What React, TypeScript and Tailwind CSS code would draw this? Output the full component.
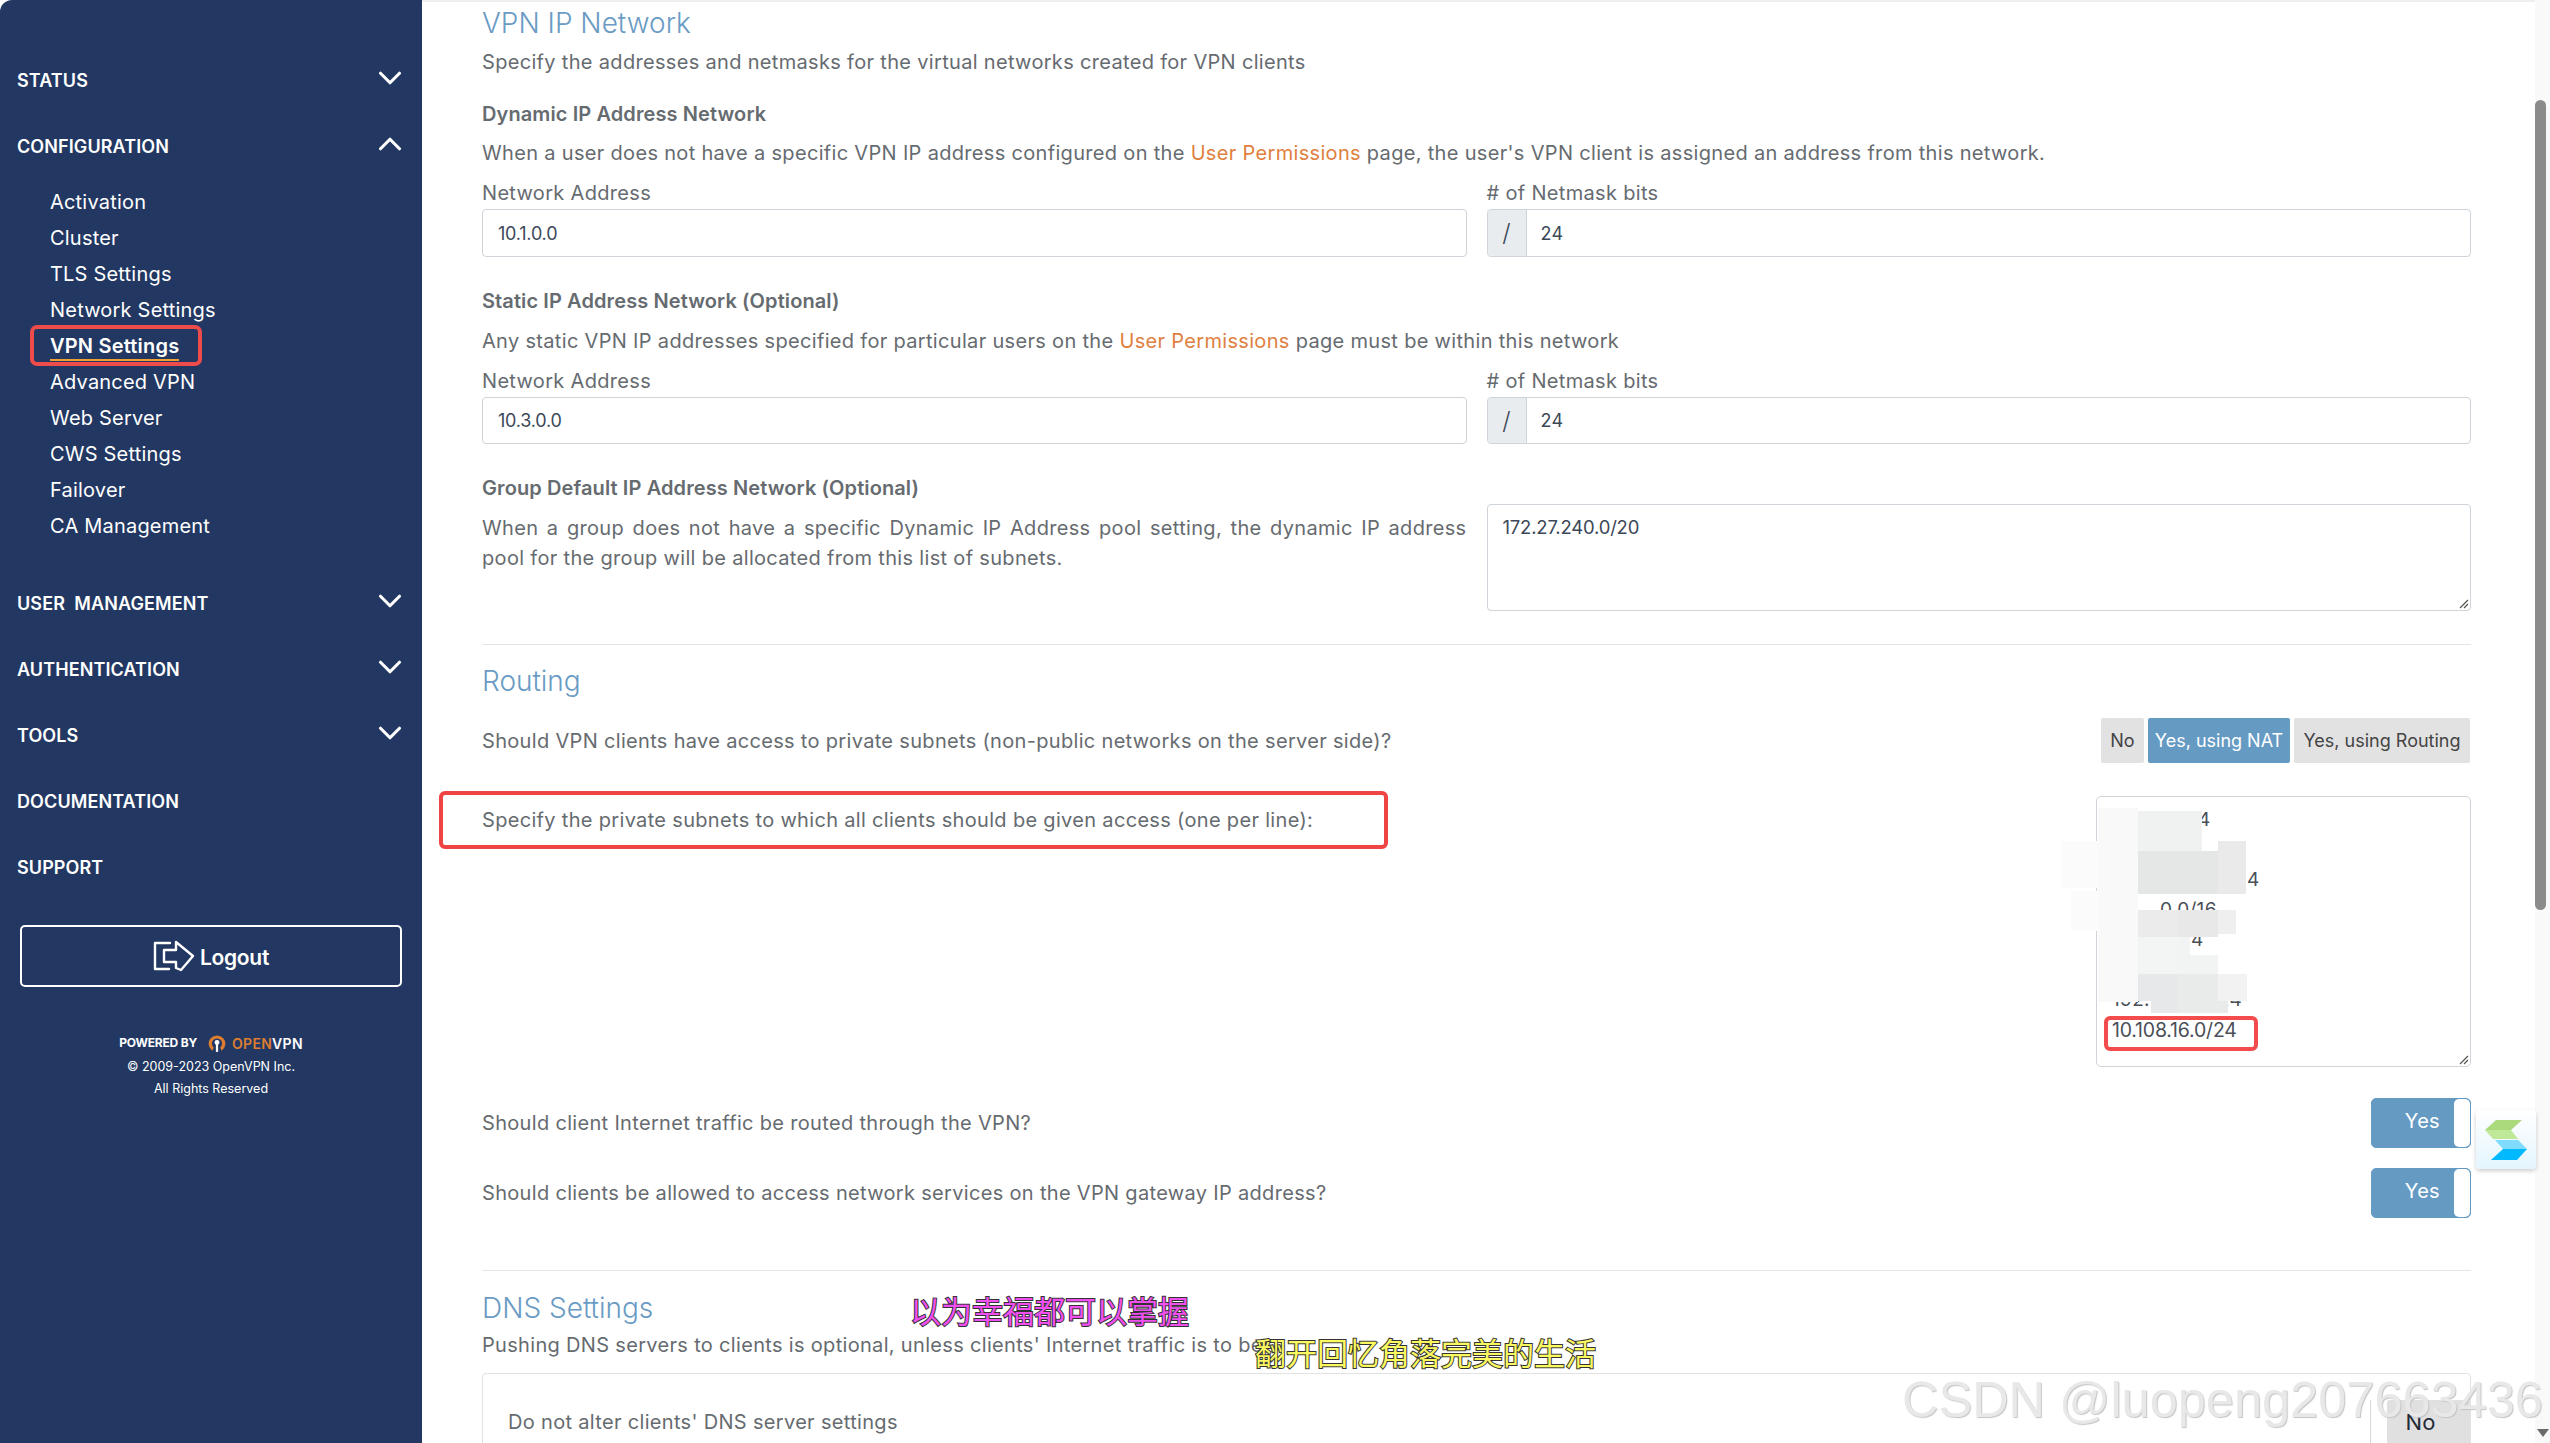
import React from "react";
import { ChevronDown, ChevronUp } from "lucide-react";

const configItems = [
  "Activation",
  "Cluster",
  "TLS Settings",
  "Network Settings",
  "VPN Settings",
  "Advanced VPN",
  "Web Server",
  "CWS Settings",
  "Failover",
  "CA Management",
];

// blurred patches over the redacted subnets
const patches = [
  "left-[1px] top-[11px] w-[40px] h-[194px] bg-[#f9f9f9]",
  "left-[-36px] top-[44px] w-[37px] h-[47px] bg-[#fbfbfb]",
  "left-[-26px] top-[94px] w-[27px] h-[40px] bg-[#fbfbfb]",
  "left-[41px] top-[14px] w-[40px] h-[40px] bg-[#f0f1f1]",
  "left-[41px] top-[54px] w-[40px] h-[43px] bg-[#e5e6e6]",
  "left-[41px] top-[113px] w-[40px] h-[27px] bg-[#ebebeb]",
  "left-[41px] top-[140px] w-[40px] h-[37px] bg-[#f3f4f4]",
  "left-[41px] top-[177px] w-[40px] h-[27px] bg-[#e7e8e9]",
  "left-[54px] top-[204px] w-[27px] h-[12px] bg-[#e7e8e9]",
  "left-[81px] top-[14px] w-[24px] h-[40px] bg-[#f0f1f1]",
  "left-[81px] top-[54px] w-[40px] h-[43px] bg-[#e5e6e6]",
  "left-[81px] top-[113px] w-[40px] h-[27px] bg-[#e8e8e8]",
  "left-[81px] top-[140px] w-[12px] h-[18px] bg-[#f2f3f3]",
  "left-[81px] top-[158px] w-[40px] h-[19px] bg-[#f2f3f3]",
  "left-[81px] top-[177px] w-[50px] h-[39px] bg-[#e9eaea]",
  "left-[121px] top-[44px] w-[28px] h-[53px] bg-[#eaeaea]",
  "left-[121px] top-[113px] w-[18px] h-[24px] bg-[#efefef]",
  "left-[121px] top-[177px] w-[29px] h-[27px] bg-[#f2f2f2]",
];

const NavHead = ({ label, open, chevron = true }: { label: string; open?: boolean; chevron?: boolean }) => (
  <div className="h-[66px] flex items-center justify-between pl-[17px] pr-[13px]">
    <span className="text-[18px] font-semibold tracking-[0.1px] whitespace-pre text-white">{label}</span>
    {chevron &&
      (open ? (
        <ChevronUp className="w-[38px] h-[38px] -mt-[5px] text-white" strokeWidth={2} />
      ) : (
        <ChevronDown className="w-[38px] h-[38px] -mt-[5px] text-white" strokeWidth={2} />
      ))}
  </div>
);

const Sidebar = () => (
  <aside className="w-[422px] h-full shrink-0 bg-[#223862] rounded-tl-[12px] text-white pt-[47px]">
    <NavHead label="STATUS" />
    <NavHead label="CONFIGURATION" open />
    <ul className="pt-[5px] pb-[26px] pl-[50px]">
      {configItems.map((item) =>
        item === "VPN Settings" ? (
          <li key={item} className="relative h-[36px] leading-[36px] text-[20px] tracking-[0.2px]">
            <span className="font-semibold border-b-2 border-[#f0a030] pb-[1px]">{item}</span>
            <div className="absolute left-[-20px] top-[-3px] w-[172px] h-[41px] border-[4px] border-[#ee4b4b] rounded-[7px]" />
          </li>
        ) : (
          <li key={item} className="h-[36px] leading-[36px] text-[20px] tracking-[0.2px]">
            {item}
          </li>
        )
      )}
    </ul>
    <NavHead label="USER  MANAGEMENT" />
    <NavHead label="AUTHENTICATION" />
    <NavHead label="TOOLS" />
    <NavHead label="DOCUMENTATION" chevron={false} />
    <NavHead label="SUPPORT" chevron={false} />
    <div className="mt-[25px] mx-[20px] h-[62px] border-2 border-white rounded-[5px] flex items-center justify-center gap-[3px]">
      <svg width="44" height="32" viewBox="0 0 44 32" fill="none" stroke="white" strokeWidth="2.4" strokeLinejoin="round" strokeLinecap="round">
        <path d="M17 3H2v26h14" />
        <path d="M11 10h12V2l17 14-12 14-5-2v-6H11z" />
      </svg>
      <span className="text-[21px] font-semibold mt-[4px] tracking-[-0.3px]">Logout</span>
    </div>
    <div className="mt-[44px] flex items-center justify-center gap-[10px] h-[24px]">
      <span className="text-[12px] font-bold tracking-[-0.2px]">POWERED BY</span>
      <span className="flex items-center gap-[5px]">
        <svg width="20" height="20" viewBox="0 0 18 18" fill="none">
          <path d="M5 16A7.5 7.5 0 1 1 13 16L12 13A4.6 4.6 0 1 0 6 13Z" fill="#dd7d30" />
          <circle cx="9" cy="8.5" r="2.2" fill="white" />
          <path d="M8 9h2v8H8z" fill="white" />
        </svg>
        <span className="text-[14px] font-semibold tracking-[0.3px]">
          <span className="text-[#dd7d30]">OPEN</span>VPN
        </span>
      </span>
    </div>
    <p className="text-center text-[12.5px] leading-[20px] mt-[2px]">© 2009-2023 OpenVPN Inc.</p>
    <p className="text-center text-[12.5px] leading-[20px] mt-[2px]">All Rights Reserved</p>
  </aside>
);

const SectionTitle = ({ children, className = "" }: { children: React.ReactNode; className?: string }) => (
  <h2 className={`text-[28px] font-light text-[#6a9bc4] h-[46px] leading-[46px] ${className}`}>{children}</h2>
);

const Body = ({ children, className = "" }: { children: React.ReactNode; className?: string }) => (
  <p className={`h-[32px] leading-[32px] whitespace-nowrap ${className}`}>{children}</p>
);

const NetworkRow = ({ address, h }: { address: string; h: string }) => (
  <div className="mt-[8px] grid grid-cols-2 gap-x-[20px]">
    <div>
      <Body>Network Address</Body>
      <div className={`${h} border border-[#ced4da] rounded-[4px] px-[15px] flex items-center text-[#3c4858] text-[18px] tracking-[-0.2px]`}>{address}</div>
    </div>
    <div>
      <Body># of Netmask bits</Body>
      <div className={`${h} border border-[#ced4da] rounded-[4px] flex items-stretch text-[#3c4858] text-[18px]`}>
        <span className="w-[39px] bg-[#e9ecef] border-r border-[#ced4da] rounded-l-[4px] flex items-center justify-center text-[24px] font-light">/</span>
        <span className="pl-[14px] flex items-center">24</span>
      </div>
    </div>
  </div>
);

const Toggle = ({ className = "" }: { className?: string }) => (
  <div className={`w-[100px] h-[50px] rounded-[5px] bg-[#659ac3] border border-[#659ac3] flex overflow-hidden ${className}`}>
    <span className="flex-1 text-white text-[20px] flex items-center justify-end pr-[14px] pb-[5px]">Yes</span>
    <span className="w-[16px] bg-white rounded-[5px]" />
  </div>
);

const SubnetBox = () => (
  <div className="relative w-[375px] h-[271px] border border-[#ced4da] rounded-[5px] pt-[8px] pl-[15px] text-[19px] leading-[30px] text-[#4a4f57]">
    <div className="pl-[86px] h-[30px]">4</div>
    <div className="h-[30px]" />
    <div className="pl-[135px] h-[30px]">4</div>
    <div className="pl-[48px] h-[30px]">0.0/16</div>
    <div className="pl-[79px] h-[30px]">4</div>
    <div className="h-[30px]" />
    <div className="h-[30px] flex justify-between w-[130px] overflow-hidden">
      <span>192.</span>
      <span>24</span>
    </div>
    <div className="h-[30px] text-[19.5px] tracking-[-0.2px]">10.108.16.0/24</div>
    {patches.map((p) => (
      <div key={p} className={`absolute ${p}`} />
    ))}
    <div className="absolute left-[7px] top-[219px] w-[154px] h-[35px] border-[4px] border-[#f44c4c] rounded-[6px]" />
    <svg className="absolute right-[1px] bottom-[1px]" width="10" height="10" viewBox="0 0 10 10" stroke="#555" strokeWidth="1.2">
      <path d="M1 9 9 1M5 9 9 5" />
    </svg>
  </div>
);

const FloatingWidget = () => (
  <div className="absolute left-[2476px] top-[1110px] w-[60px] h-[59px] rounded-[4px] bg-gradient-to-b from-white to-[#e4f5fe] shadow-[0_2px_4px_rgba(0,0,0,0.2)] flex items-center justify-center">
    <svg width="44" height="42" viewBox="0 0 44 42">
      <path d="M12 1H38L27 11H1z" fill="#abda7c" />
      <path d="M1 11H27L34 20H9z" fill="#bfe998" />
      <path d="M11 21H34L43 30H19z" fill="#7fdcff" />
      <path d="M19 30H43L33 41H7z" fill="#00b9ff" />
    </svg>
  </div>
);

const Overlays = () => (
  <>
    <div className="absolute left-[439px] top-[791px] w-[949px] h-[58px] border-[4px] border-[#ee4444] rounded-[6px]" />
    <FloatingWidget />
    <div className="absolute left-[910px] top-[1290px] text-[31px] leading-[40px] font-['Noto_Sans_CJK_SC',sans-serif] text-[#f050f0] [-webkit-text-stroke:2px_#333] [paint-order:stroke_fill] whitespace-nowrap">
      以为幸福都可以掌握
    </div>
    <div className="absolute left-[1255px] top-[1332px] text-[31px] leading-[40px] font-['Noto_Sans_CJK_SC',sans-serif] text-[#fbf860] [-webkit-text-stroke:2px_#333] [paint-order:stroke_fill] whitespace-nowrap">
      翻开回忆角落完美的生活
    </div>
    <div className="absolute left-[1902px] top-[1368px] text-[50.5px] leading-[64px] font-['Liberation_Sans',sans-serif] text-[#e8e8e8] [text-shadow:1px_1px_1px_#c4c4c4] whitespace-nowrap">
      CSDN @luopeng207663436
    </div>
  </>
);

const Scrollbar = () => (
  <div className="w-[15px] h-full shrink-0 bg-[#f9f9f9] relative">
    <div className="absolute left-0 top-[100px] w-[11px] h-[810px] rounded-[6px] bg-[#8b8b8b]" />
    <div className="absolute left-[2px] bottom-[6px] w-0 h-0 border-x-[6px] border-x-transparent border-t-[8px] border-t-[#6a6a6a]" />
  </div>
);

export default function App() {
  return (
    <div className="relative w-[2550px] h-[1443px] overflow-hidden flex bg-white font-['Inter',sans-serif]">
      <Sidebar />
      <main className="flex-1 min-w-0 overflow-hidden pl-[60px] pr-[64px] text-[20px] tracking-[0.32px] text-[#666b70] border-t-2 border-[#eeeeee]">
        <SectionTitle className="-mt-[2px] tracking-normal">VPN IP Network</SectionTitle>
        <Body>Specify the addresses and netmasks for the virtual networks created for VPN clients</Body>

        <Body className="mt-[20px] font-semibold tracking-[0.1px]">Dynamic IP Address Network</Body>
        <Body className="mt-[7px]">
          When a user does not have a specific VPN IP address configured on the <span className="text-[#e08040]">User Permissions</span> page, the user's VPN client is assigned an address from this network.
        </Body>
        <NetworkRow address="10.1.0.0" h="h-[48px]" />

        <Body className="mt-[28px] font-semibold tracking-[0.1px]">Static IP Address Network (Optional)</Body>
        <Body className="mt-[8px]">
          Any static VPN IP addresses specified for particular users on the <span className="text-[#e08040]">User Permissions</span> page must be within this network
        </Body>
        <NetworkRow address="10.3.0.0" h="h-[47px]" />

        <Body className="mt-[28px] font-semibold tracking-[0.1px]">Group Default IP Address Network (Optional)</Body>
        <div className="grid grid-cols-2 gap-x-[20px]">
          <p className="mt-[9px] leading-[30px] text-justify">
            When a group does not have a specific Dynamic IP Address pool setting, the dynamic IP address pool for the group will be allocated from this list of subnets.
          </p>
          <div className="relative h-[107px] border border-[#ced4da] rounded-[4px] px-[15px] py-[9px] text-[#3c4858] text-[18.5px] tracking-[-0.2px]">
            172.27.240.0/20
            <svg className="absolute right-[1px] bottom-[1px]" width="10" height="10" viewBox="0 0 10 10" stroke="#555" strokeWidth="1.2">
              <path d="M1 9 9 1M5 9 9 5" />
            </svg>
          </div>
        </div>

        <hr className="mt-[33px] border-[#e5e5e5]" />
        <SectionTitle className="mt-[13px] tracking-normal">Routing</SectionTitle>

        <div className="mt-[14px] flex items-center justify-between">
          <Body>Should VPN clients have access to private subnets (non-public networks on the server side)?</Body>
          <div className="flex gap-[4px] text-[18px] tracking-normal h-[45px] mr-[1px]">
            <span className="w-[43px] bg-[#e2e2e2] rounded-[2px] flex items-center justify-center text-[#444]">No</span>
            <span className="w-[142px] bg-[#659ac3] rounded-[2px] flex items-center justify-center text-white">Yes, using NAT</span>
            <span className="w-[176px] bg-[#e2e2e2] rounded-[2px] flex items-center justify-center text-[#444]">Yes, using Routing</span>
          </div>
        </div>

        <div className="mt-[33px] flex items-start justify-between">
          <Body className="mt-[8px]">Specify the private subnets to which all clients should be given access (one per line):</Body>
          <SubnetBox />
        </div>

        <div className="mt-[31px] flex items-center justify-between">
          <Body>Should client Internet traffic be routed through the VPN?</Body>
          <Toggle />
        </div>
        <div className="mt-[20px] flex items-center justify-between">
          <Body>Should clients be allowed to access network services on the VPN gateway IP address?</Body>
          <Toggle />
        </div>

        <hr className="mt-[52px] border-[#e5e5e5]" />
        <SectionTitle className="mt-[14px] tracking-normal">DNS Settings</SectionTitle>
        <Body className="-mt-[2px]">Pushing DNS servers to clients is optional, unless clients' Internet traffic is to be</Body>

        <div className="mt-[12px] border border-[#e2e2e2] rounded-t-[4px] pt-[26px] pl-[25px] flex justify-between h-[120px]">
          <Body className="mt-[6px]">Do not alter clients' DNS server settings</Body>
          <div className="w-[100px] h-[50px] border-l border-[#d8d8d8] pl-[16px]">
            <span className="h-full bg-[#e0e0e0] text-[#222a38] text-[22px] tracking-normal rounded-[3px] flex items-center justify-center pr-[16px] pb-[6px]">No</span>
          </div>
        </div>
      </main>
      <Scrollbar />
      <Overlays />
    </div>
  );
}
